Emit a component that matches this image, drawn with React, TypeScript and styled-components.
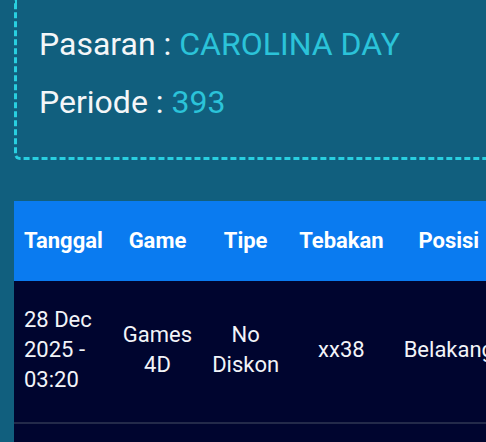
import styled, { createGlobalStyle } from 'styled-components'

const GlobalStyle = createGlobalStyle`
  html, body {
    margin: 0;
    padding: 0;
    background: #115f7e;
    overflow: hidden;
  }
  body {
    font-family: Roboto, 'Liberation Sans', sans-serif;
    color: #f4f6f8;
  }
`

const rows = [
  {
    tanggal: ['28 Dec', '2025 -', '03:20'],
    game: ['Games', '4D'],
    tipe: ['No', 'Diskon'],
    tebakan: 'xx38',
    posisi: 'Belakang',
    bayar: '100',
  },
]

export default function App() {
  return (
    <>
      <GlobalStyle />
      <Page>
        <InfoBox>
          <InfoLine>
            Pasaran : <InfoValue>CAROLINA DAY</InfoValue>
          </InfoLine>
          <InfoLine>
            Periode : <InfoValue>393</InfoValue>
          </InfoLine>
        </InfoBox>

        <Table>
          <thead>
            <tr>
              <Th $align="left">Tanggal</Th>
              <Th>Game</Th>
              <Th>Tipe</Th>
              <Th>Tebakan</Th>
              <Th>Posisi</Th>
              <Th>Bayar</Th>
            </tr>
          </thead>
          <tbody>
            {rows.map((r) => (
              <tr key={r.tebakan}>
                <Td $align="left">
                  {r.tanggal.map((l) => (
                    <Line key={l}>{l}</Line>
                  ))}
                </Td>
                <Td>
                  {r.game.map((l) => (
                    <Line key={l}>{l}</Line>
                  ))}
                </Td>
                <Td>
                  {r.tipe.map((l) => (
                    <Line key={l}>{l}</Line>
                  ))}
                </Td>
                <Td>{r.tebakan}</Td>
                <Td>{r.posisi}</Td>
                <Td>{r.bayar}</Td>
              </tr>
            ))}
            <tr>
              <Td $align="left">&nbsp;</Td>
              <Td />
              <Td />
              <Td />
              <Td />
              <Td />
            </tr>
          </tbody>
        </Table>
      </Page>
    </>
  )
}

const Page = styled.div({
  width: '700px',
  padding: '0 0 0 14px',
  display: 'flex',
  flexDirection: 'column',
  gap: '41px',
})

const InfoBox = styled.div({
  border: '3px dashed #29cfe0',
  borderTop: 'none',
  borderRadius: '0 0 6px 6px',
  padding: '15px 22px 26px',
  display: 'flex',
  flexDirection: 'column',
})

const InfoLine = styled.div({
  fontSize: '32px',
  lineHeight: '58px',
  color: '#f4f6f8',
})

const InfoValue = styled.span({
  color: '#2bc3d9',
})

const Table = styled.table({
  borderCollapse: 'collapse',
  width: 'max-content',
  background: '#00052f',
})

const Th = styled.th<{ $align?: 'left' | 'center' }>(({ $align }) => ({
  background: '#0a7bf0',
  color: '#ffffff',
  fontSize: '22px',
  fontWeight: 700,
  lineHeight: '30px',
  padding: '25px 10px',
  textAlign: $align ?? 'center',
}))

const Td = styled.td<{ $align?: 'left' | 'center' }>(({ $align }) => ({
  fontSize: '22px',
  lineHeight: '30px',
  padding: '24px 10px 27px',
  textAlign: $align ?? 'center',
  verticalAlign: 'middle',
  color: '#f2f4f8',
  borderBottom: '2px solid #232a4a',
}))

const Line = styled.div({
  whiteSpace: 'nowrap',
})
